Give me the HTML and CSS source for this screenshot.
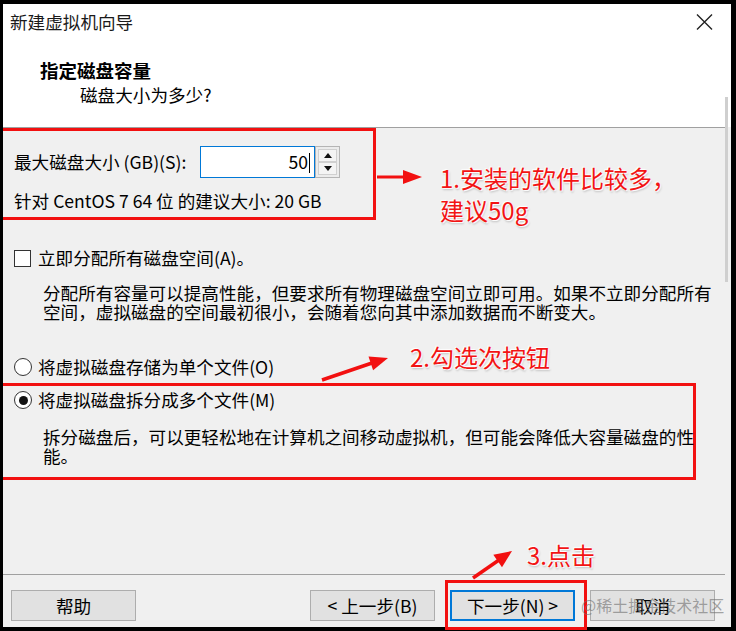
FILE: index.html
```html
<!DOCTYPE html>
<html>
  <head>
    <meta charset="utf-8" />
    <title>新建虚拟机向导</title>
    <link rel="stylesheet" href="styles.css">
  </head>

  <body>
    <div class="screen">
      <div class="frame">
        <div class="dialog">
          <div class="header">
            <div class="titlebar">
              <span class="title">新建虚拟机向导</span>
              <svg class="close" width="17" height="16" viewBox="0 0 17 16">
                <path d="M1 0.5 L16 15.5 M16 0.5 L1 15.5" stroke="#222" stroke-width="1.4" fill="none" />
              </svg>
            </div>
            <div class="heading">指定磁盘容量</div>
            <div class="subheading">磁盘大小为多少?</div>
          </div>

          <div class="content">
            <div class="mark mark-size">
              <div class="size-row">
                <span class="size-label">最大磁盘大小 (GB)(S):</span>
                <div class="field">50<span class="caret"></span></div>
                <div class="spinner">
                  <span class="spin spin-up"></span>
                  <span class="spin spin-down"></span>
                </div>
              </div>
              <div class="hint">针对 CentOS 7 64 位 的建议大小: 20 GB</div>
            </div>

            <div class="option check-row">
              <span class="checkbox"></span>立即分配所有磁盘空间(A)。
            </div>
            <p class="desc">
              分配所有容量可以提高性能，但要求所有物理磁盘空间立即可用。如果不立即分配所有<br>空间，虚拟磁盘的空间最初很小，会随着您向其中添加数据而不断变大。
            </p>

            <div class="option radio-row">
              <span class="radio"></span>将虚拟磁盘存储为单个文件(O)
            </div>

            <div class="mark mark-split">
              <div class="option">
                <span class="radio checked"></span>将虚拟磁盘拆分成多个文件(M)
              </div>
              <p class="desc desc-split">
                拆分磁盘后，可以更轻松地在计算机之间移动虚拟机，但可能会降低大容量磁盘的性<br>能。
              </p>
            </div>
          </div>

          <div class="footer">
            <button class="btn">帮助</button>
            <div class="nav">
              <button class="btn">&lt; 上一步(B)</button>
              <button class="btn primary">下一步(N) &gt;</button>
              <button class="btn">取消</button>
            </div>
          </div>
        </div>

        <div class="scrollbar"><div class="thumb"></div></div>
      </div>

      <!-- annotations drawn over the screenshot -->
      <svg class="marks" width="736" height="631" viewBox="0 0 736 631">
        <g fill="#f21010" stroke="#f21010">
          <line x1="377" y1="177" x2="405" y2="177" stroke-width="3" />
          <polygon points="422,177 403,170 403,184" stroke="none" />

          <line x1="322" y1="380" x2="372" y2="363" stroke-width="3.5" />
          <polygon points="388,358 373.1,370.2 368.5,356.6" stroke="none" />

          <line x1="473" y1="578" x2="499" y2="560" stroke-width="3.5" />
          <polygon points="512,551 502,567.2 493.3,554.8" stroke="none" />

          <rect x="446.5" y="581.5" width="139" height="47" fill="none" stroke-width="3" />
        </g>
      </svg>

      <div class="note note-size">1.安装的软件比较多，<br>建议50g</div>
      <div class="note note-radio">2.勾选次按钮</div>
      <div class="note note-next">3.点击</div>
      <div class="watermark">@稀土掘金技术社区</div>
    </div>
  </body>
</html>
```

FILE: styles.css
```css
html {
  font-family: "Noto Sans CJK SC", "Noto Sans", sans-serif;
  font-size: 17.6px;
  color: #000;
}

body {
  margin: 0;
}

.screen {
  position: relative;
  width: 736px;
  height: 631px;
  overflow: hidden;
}

.frame {
  display: flex;
  box-sizing: border-box;
  width: 736px;
  height: 631px;
  border-style: solid;
  border-color: #000;
  border-width: 4px 5px 4px 3px;
  background: #f0f0f0;
}

.dialog {
  flex: 1;
  display: flex;
  flex-direction: column;
  min-width: 0;
}

.scrollbar {
  width: 6px;
  background: linear-gradient(#fff 0, #fff 123px, #f0f0f0 123px);
}
.scrollbar .thumb {
  width: 3px;
  height: 185px;
  margin: 93px 0 0 0;
  background: #cfcfcf;
}

/* header */

.header {
  height: 123px;
  background: #fff;
  border-bottom: 1px solid #a0a0a0;
}

.titlebar {
  display: flex;
  justify-content: space-between;
  align-items: center;
  height: 36px;
  padding: 0 12px 0 7px;
}
.title {
  line-height: 36px;
  color: #1a1a1a;
}

.heading {
  margin-top: 18px;
  padding-left: 37px;
  font-size: 18.5px;
  font-weight: bold;
  line-height: 24px;
}

.subheading {
  margin-top: 1px;
  padding-left: 77px;
  line-height: 24px;
}

/* body */

.content {
  flex: 1;
}

.mark {
  box-sizing: border-box;
  border: 3px solid #f21010;
  border-left: 0;
}

.mark-size {
  width: 373px;
  padding: 15px 0 5px 11px;
}

.size-row {
  display: flex;
  align-items: center;
  height: 32px;
}
.size-label {
  width: 186px;
  line-height: 22px;
}

.field {
  box-sizing: border-box;
  width: 115px;
  height: 32px;
  border: 1px solid #0078d7;
  background: #fff;
  text-align: right;
  padding-right: 4px;
  line-height: 30px;
}
.caret {
  display: inline-block;
  width: 1px;
  height: 20px;
  margin-left: 1px;
  vertical-align: -4px;
  background: #000;
}

.spinner {
  display: flex;
  flex-direction: column;
  box-sizing: border-box;
  width: 25px;
  height: 32px;
  padding: 2px;
  border: 1px solid #b5b5b5;
  background: #ececec;
}
.spin {
  flex: 1;
  display: flex;
  align-items: center;
  justify-content: center;
  border: 1px solid #d0d0d0;
  background: #f4f4f4;
}
.spin-up::after,
.spin-down::after {
  content: "";
  border-left: 4px solid transparent;
  border-right: 4px solid transparent;
}
.spin-up::after {
  border-bottom: 5px solid #111;
}
.spin-down::after {
  border-top: 5px solid #111;
}

.hint {
  margin-top: 12px;
  line-height: 22px;
}

.option {
  display: flex;
  align-items: center;
  padding-left: 11px;
  line-height: 22px;
}

.check-row {
  margin-top: 27px;
}

.checkbox {
  box-sizing: border-box;
  width: 17px;
  height: 17px;
  margin-right: 7px;
  border: 1px solid #333;
  background: #fff;
}

.radio {
  box-sizing: border-box;
  display: flex;
  align-items: center;
  justify-content: center;
  width: 18px;
  height: 18px;
  margin-right: 6px;
  border: 1px solid #333;
  border-radius: 50%;
  background: #fff;
}
.radio.checked::after {
  content: "";
  width: 9px;
  height: 9px;
  border-radius: 50%;
  background: #111;
}

.desc {
  margin: 14px 0 0 0;
  padding-left: 40px;
  line-height: 19px;
  white-space: nowrap;
}

.radio-row {
  margin-top: 35px;
}

.mark-split {
  width: 693px;
  margin-top: 5px;
  padding: 3px 0 12px 0;
}
.desc-split {
  margin-top: 16px;
}

/* footer */

.footer {
  display: flex;
  justify-content: space-between;
  height: 52px;
  padding: 15px 10px 0 8px;
  box-sizing: border-box;
  border-top: 1px solid #a0a0a0;
  height: 53px;
}

.nav {
  display: flex;
  gap: 15px;
}

.btn {
  box-sizing: border-box;
  width: 125px;
  height: 31px;
  padding: 0;
  border: 1px solid #adadad;
  background: #e1e1e1;
  font: inherit;
  line-height: 29px;
  color: #000;
}
.btn.primary {
  border: 2px solid #0078d7;
  line-height: 27px;
}

/* annotations */

.marks {
  position: absolute;
  left: 0;
  top: 0;
  pointer-events: none;
}

.note {
  position: absolute;
  font-size: 24px;
  line-height: 32px;
  color: #f21414;
  white-space: nowrap;
  text-shadow: 0 0 2px #fff, 1px 1px 1px #fff, -1px -1px 1px #fff, 1px 2px 2px #bbb;
}
.note-size {
  left: 440px;
  top: 162px;
}
.note-radio {
  left: 410px;
  top: 341px;
}
.note-next {
  left: 527px;
  top: 539px;
}

.watermark {
  position: absolute;
  left: 581px;
  top: 593px;
  font-size: 16px;
  line-height: 24px;
  color: rgba(110, 110, 110, 0.6);
  white-space: nowrap;
}
```
